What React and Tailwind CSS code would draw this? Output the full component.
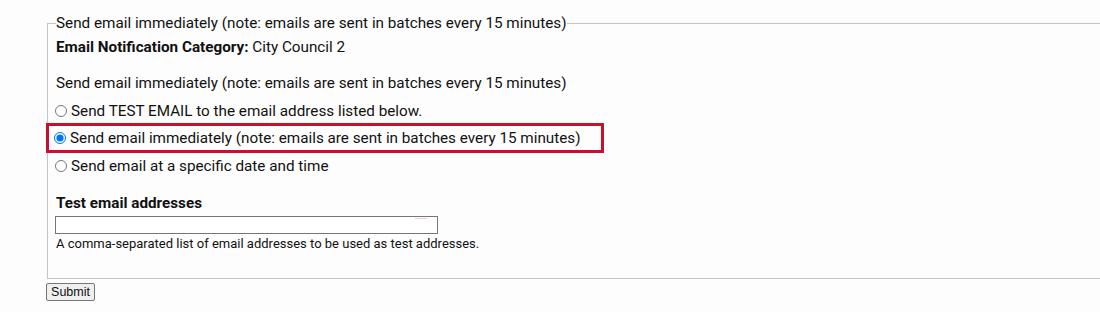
import { useState } from 'react';

const OPTIONS = [
  { id: 'test', label: 'Send TEST EMAIL to the email address listed below.' },
  { id: 'now', label: 'Send email immediately (note: emails are sent in batches every 15 minutes)' },
  { id: 'later', label: 'Send email at a specific date and time' },
];

export default function App() {
  const [mode, setMode] = useState('now');
  const [emails, setEmails] = useState('');

  return (
    <div className="w-[1100px] h-[312px] overflow-hidden bg-[#fdfdfd] text-[#111] font-['Roboto',sans-serif]">
      <form onSubmit={(e) => e.preventDefault()} className="pt-[14px]">
        <fieldset className="ml-[47px] w-[1100px] border border-r-0 border-[#c4c4c4] pl-[8px] pt-[5px] pb-[26px] m-0">
          <legend className="text-[15.25px] leading-[18px] px-0">
            Send email immediately (note: emails are sent in batches every 15 minutes)
          </legend>
          <p className="text-[15.25px] leading-[20px]">
            <b className="font-bold">Email Notification Category:</b> City Council 2
          </p>
          <p className="text-[15.25px] leading-[20px] mt-[16px]">
            Send email immediately (note: emails are sent in batches every 15 minutes)
          </p>
          <div className="mt-[8px] flex flex-col text-[15.25px] leading-[20px]">
            {OPTIONS.map((o) => (
              <label
                key={o.id}
                className={
                  o.id === mode
                    ? '-ml-[10px] mt-[2px] mb-[3px] w-[558px] h-[30px] border-[3.5px] border-[#c8102e] pl-[6px] flex items-center gap-[4px]'
                    : 'flex items-center gap-[4px] h-[20px]'
                }
              >
                <input
                  type="radio"
                  name="mode"
                  checked={mode === o.id}
                  onChange={() => setMode(o.id)}
                  className="m-0 w-[12px] h-[12px] -ml-[1px]"
                />
                <span>{o.label}</span>
              </label>
            ))}
          </div>
          <div className="mt-[17px] text-[15.25px] leading-[20px] font-bold">Test email addresses</div>
          <div className="relative mt-[3px] -ml-[1px] w-[383px]">
            <input
              type="text"
              value={emails}
              onChange={(e) => setEmails(e.target.value)}
              className="block w-[383px] h-[18px] border border-[#767676] bg-white px-1 text-[13px]"
            />
            <span className="absolute top-[2px] right-[11px] w-[12px] h-px bg-[#f6c9cf]" />
          </div>
          <p className="text-[13px] leading-[16px] mt-[2px]">
            A comma-separated list of email addresses to be used as test addresses.
          </p>
        </fieldset>
        <button
          type="submit"
          className="mt-[2px] ml-[46px] w-[49px] h-[18px] border border-[#767676] bg-[#efefef] text-[12.5px] leading-[14px] font-['Liberation_Sans',sans-serif] rounded-[2px]"
        >
          Submit
        </button>
      </form>
    </div>
  );
}
